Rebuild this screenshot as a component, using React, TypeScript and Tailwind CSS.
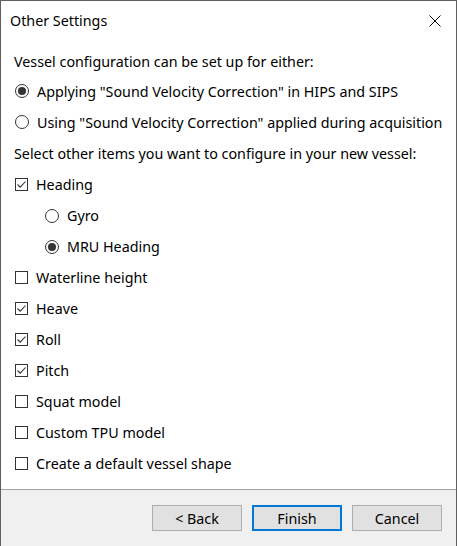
import React from "react";

const font = { fontFamily: '"Noto Sans", "Open Sans", sans-serif' };

function Check({ checked }: { checked?: boolean }) {
  return (
    <span className="w-[13px] h-[13px] border border-[#333333] bg-white flex items-center justify-center shrink-0">
      {checked && (
        <svg width="11" height="11" viewBox="0 0 11 11">
          <path d="M1.5 5.5 L4.2 8.2 L9.5 2.5" fill="none" stroke="#333333" strokeWidth="1.1" />
        </svg>
      )}
    </span>
  );
}

function Radio({ checked }: { checked?: boolean }) {
  return (
    <span className="w-[14px] h-[14px] rounded-full border border-[#333333] bg-white flex items-center justify-center shrink-0">
      {checked && <span className="w-[8px] h-[8px] rounded-full bg-[#333333]" />}
    </span>
  );
}

function CheckRow({ label, checked }: { label: string; checked?: boolean }) {
  return (
    <div className="h-[31px] flex items-center pl-[14px] gap-[8px]">
      <Check checked={checked} />
      <span className="pt-[2px]">{label}</span>
    </div>
  );
}

function RadioRow({ label, checked, indent, h }: { label: string; checked?: boolean; indent?: boolean; h: string }) {
  return (
    <div className={`${h} flex items-center ${indent ? "pl-[44px]" : "pl-[14px]"} gap-[8px]`}>
      <Radio checked={checked} />
      <span className="pt-[2px]">{label}</span>
    </div>
  );
}

export default function App() {
  return (
    <div
      className="w-[457px] h-[546px] bg-white border-l border-r border-t border-[#5f5f5f] flex flex-col text-[14.3px] text-black leading-none"
      style={font}
    >
      <div className="h-[39px] flex items-center justify-between pl-[9px] pr-[15px]">
        <span className="pt-[2px]">Other Settings</span>
        <svg width="12" height="12" viewBox="0 0 12 12">
          <path d="M0.5 0.5 L11.5 11.5 M11.5 0.5 L0.5 11.5" stroke="#000" strokeWidth="1" />
        </svg>
      </div>
      <div className="flex-1 flex flex-col pt-[7px]">
        <div className="h-[29px] flex items-center pl-[13px] pt-[2px]">Vessel configuration can be set up for either:</div>
        <RadioRow h="h-[30px]" checked label={'Applying "Sound Velocity Correction" in HIPS and SIPS'} />
        <RadioRow h="h-[32px]" label={'Using "Sound Velocity Correction" applied during acquisition'} />
        <div className="h-[31px] flex items-center pl-[13px] pt-[2px]">Select other items you want to configure in your new vessel:</div>
        <CheckRow checked label="Heading" />
        <RadioRow h="h-[31px]" indent label="Gyro" />
        <RadioRow h="h-[31px]" indent checked label="MRU Heading" />
        <CheckRow label="Waterline height" />
        <CheckRow checked label="Heave" />
        <CheckRow checked label="Roll" />
        <CheckRow checked label="Pitch" />
        <CheckRow label="Squat model" />
        <CheckRow label="Custom TPU model" />
        <CheckRow label="Create a default vessel shape" />
      </div>
      <div className="h-[57px] bg-[#f0f0f0] border-t border-[#a0a0a0] flex items-start justify-end gap-[10px] pt-[15px] pr-[14px]">
        <button className="w-[90px] h-[26px] bg-[#e1e1e1] border border-[#adadad] flex items-center justify-center pt-[2px]">&lt; Back</button>
        <button className="w-[90px] h-[26px] bg-[#e1e1e1] border-2 border-[#0078d7] flex items-center justify-center pt-[2px]">Finish</button>
        <button className="w-[90px] h-[26px] bg-[#e1e1e1] border border-[#adadad] flex items-center justify-center pt-[2px]">Cancel</button>
      </div>
    </div>
  );
}
